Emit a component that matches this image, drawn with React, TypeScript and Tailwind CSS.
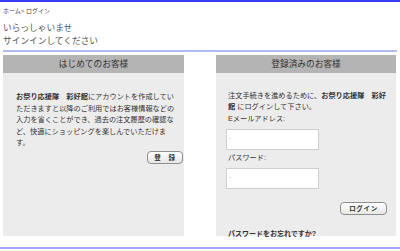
import React from 'react';

const font = "font-['Liberation_Sans','Noto_Sans_CJK_JP',sans-serif]";

const SmallButton: React.FC<{ label: string; width: string }> = ({ label, width }) => (
  <button
    className={`${width} h-[13px] rounded-[4px] border border-[#8f8f8f] bg-gradient-to-b from-white to-[#e6e6e6] text-[6.5px] leading-[11px] font-bold text-[#333] tracking-[0.1em]`}
  >
    {label}
  </button>
);

export default function App() {
  return (
    <div className={`w-[400px] h-[251px] overflow-hidden bg-white border-t-2 border-[#3c3cf6] text-[#333] ${font}`}>
      {/* breadcrumb */}
      <div className="px-[3px] pt-[5px] text-[6px] leading-[8px] text-[#444]">ホーム&gt; ログイン</div>

      {/* heading */}
      <div className="mx-[3px] mt-[7px] pb-[2px] border-b-2 border-[#b1bdf2] text-[8.7px] leading-[13px] text-[#555]">
        <p>いらっしゃいませ</p>
        <p>サインインしてください</p>
      </div>

      <div className="flex mx-[3px] mt-[3px]">
        {/* new customers */}
        <div className="w-[181px]">
          <div className="h-[18px] bg-[#b4b4b4] text-center text-[8.7px] leading-[18px] text-[#333]">
            はじめてのお客様
          </div>
          <div className="h-[163px] bg-[#ececec] pt-[18px] pl-[13px] pr-[1px] text-[7.2px] leading-[11.5px] text-[#333]">
            <p className="whitespace-nowrap">
              <b>お祭り応援隊　彩好館</b>にアカウントを作成してい
              <br />
              ただきますと以降のご利用ではお客様情報などの
              <br />
              入力を省くことができ、過去の注文履歴の確認な
              <br />
              ど、快適にショッピングを楽しんでいただけま
              <br />
              す。
            </p>
            <div className="flex justify-end mt-[2px]">
              <SmallButton label="登　録" width="w-[36px]" />
            </div>
          </div>
        </div>

        {/* returning customers */}
        <div className="w-[180px] ml-[32px]">
          <div className="h-[18px] bg-[#b4b4b4] text-center text-[8.7px] leading-[18px] text-[#333]">
            登録済みのお客様
          </div>
          <div className="h-[163px] bg-[#ececec] pt-[17px] pl-[12px] pr-[9px] text-[7.2px] leading-[11px] text-[#333]">
            <p className="whitespace-nowrap">
              注文手続きを進めるために、<b>お祭り応援隊　彩好</b>
              <br />
              <b>館</b> にログインして下さい。
            </p>
            <p className="mt-[1px]">Eメールアドレス:</p>
            <div className="mt-[4.5px] -ml-[2px] w-[93px] h-[21px] bg-white border border-[#cfcfcf] px-[2px] pt-[5px] text-[5px] leading-[6px] text-[#888]">
              -
            </div>
            <p className="mt-[2.5px]">パスワード:</p>
            <div className="mt-[4.5px] -ml-[2px] w-[93px] h-[21px] bg-white border border-[#cfcfcf] px-[2px] pt-[5px] text-[5px] leading-[6px] text-[#888]">
              -
            </div>
            <div className="flex justify-end mt-[13px]">
              <SmallButton label="ログイン" width="w-[47px]" />
            </div>
            <p className="mt-[13.5px] whitespace-nowrap font-semibold text-[7px] text-[#333]">パスワードをお忘れですか?</p>
          </div>
        </div>
      </div>

      <div className="mt-[11px] border-t-2 border-[#a9a9fb]" />
    </div>
  );
}
